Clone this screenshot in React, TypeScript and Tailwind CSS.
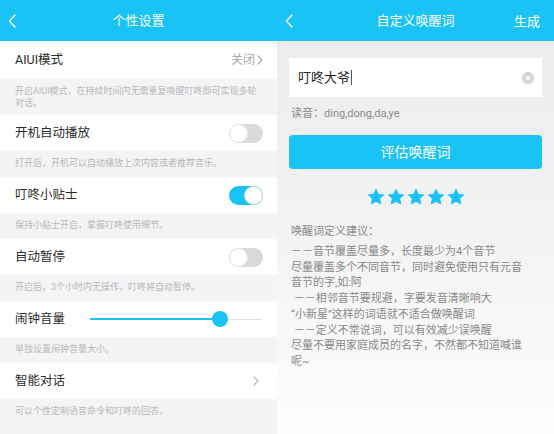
import { ReactNode } from "react";

const BLUE = "bg-[#19c3f6]";

function BackArrow() {
  return (
    <svg width="8" height="14" viewBox="0 0 8 14" className="absolute left-[8px] top-[14px]">
      <path d="M7 1 L1.5 7 L7 13" fill="none" stroke="#ffffff" strokeWidth="1.3" strokeLinecap="round" strokeLinejoin="round" />
    </svg>
  );
}

function Chevron({ color = "#a8a8a8" }: { color?: string }) {
  return (
    <svg width="6" height="10" viewBox="0 0 6 10">
      <path d="M1 1 L5 5 L1 9" fill="none" stroke={color} strokeWidth="1.2" strokeLinecap="round" strokeLinejoin="round" />
    </svg>
  );
}

function Toggle({ on }: { on?: boolean }) {
  return (
    <div
      className={
        on
          ? "relative w-[34px] h-[19px] rounded-full bg-[#19c3f6]"
          : "relative w-[34px] h-[19px] rounded-full bg-[#dadada]"
      }
    >
      <div
        className={
          on
            ? "absolute right-0 top-0 w-[19px] h-[19px] rounded-full bg-white border border-[#d8d8d8]"
            : "absolute left-0 top-0 w-[19px] h-[19px] rounded-full bg-white border border-[#e6e6e6]"
        }
      />
    </div>
  );
}

function Row({ title, right, h = "h-[36px]" }: { title: string; right?: ReactNode; h?: string }) {
  return (
    <div className={`${h} bg-white flex items-center justify-between pl-[15px] pr-[14px]`}>
      <span className="text-[12.5px] text-[#2b2b2b]">{title}</span>
      {right}
    </div>
  );
}

function Desc({ children }: { children: ReactNode }) {
  return (
    <div className="h-[26px] flex items-center px-[15px] text-[9px] text-[#b8b8b8]">{children}</div>
  );
}

function Star() {
  return (
    <svg width="18" height="18" viewBox="0 0 24 24">
      <path
        d="M12 1.8 L15.1 8.3 L22.2 9.2 L17 14.1 L18.3 21.2 L12 17.7 L5.7 21.2 L7 14.1 L1.8 9.2 L8.9 8.3 Z"
        fill="#19c3f6"
        stroke="#19c3f6"
        strokeWidth="1.2"
        strokeLinejoin="round"
      />
    </svg>
  );
}

function SettingsPanel() {
  return (
    <div className="w-[277px] h-[434px] bg-[#f3f4f6] flex flex-col">
      <div className={`relative h-[41px] ${BLUE} flex items-center justify-center`}>
        <BackArrow />
        <span className="text-white text-[13px]">个性设置</span>
      </div>
      <Row
        h="h-[38px]"
        title="AIUI模式"
        right={
          <div className="flex items-center gap-[2px] text-[12px] text-[#a8a8a8]">
            关闭
            <Chevron />
          </div>
        }
      />
      <div className="py-[6px] px-[15px] text-[9px] leading-[12px] text-[#b8b8b8]">
        开启AIUI模式，在持续时间内无需重复唤醒叮咚即可实现多轮对话。
      </div>
      <Row title="开机自动播放" right={<Toggle />} />
      <Desc>打开后，开机可以自动播放上次内容或者推荐音乐。</Desc>
      <Row title="叮咚小贴士" right={<Toggle on />} />
      <Desc>保持小贴士开启，掌握叮咚使用细节。</Desc>
      <Row title="自动暂停" right={<Toggle />} />
      <Desc>开启后，3个小时内无操作，叮咚将自动暂停。</Desc>
      <div className="h-[36px] bg-white flex items-center pl-[15px] pr-[15px]">
        <span className="text-[12.5px] text-[#2b2b2b] w-[75px]">闹钟音量</span>
        <div className="relative flex-1 h-[16px] flex items-center">
          <div className="w-[130px] h-[2px] bg-[#19c3f6]" />
          <div className="flex-1 h-[1px] bg-[#e2e2e2]" />
          <div className="absolute left-[122px] top-0 w-[16px] h-[16px] rounded-full bg-[#19c3f6]" />
        </div>
      </div>
      <Desc>单独设置闹钟音量大小。</Desc>
      <Row
        title="智能对话"
        right={
          <div className="pr-[4px]">
            <Chevron color="#b8b8b8" />
          </div>
        }
      />
      <Desc>可以个性定制语音命令和叮咚的回答。</Desc>
    </div>
  );
}

const tips = [
  "－－音节覆盖尽量多，长度最少为4个音节",
  "尽量覆盖多个不同音节，同时避免使用只有元音",
  "音节的字,如:阿",
  " －－相邻音节要规避，字要发音清晰响大",
  "“小新星”这样的词语就不适合做唤醒词",
  " －－定义不常说词，可以有效减少误唤醒",
  "尽量不要用家庭成员的名字，不然都不知道喊谁",
  "呢~",
];

function WakeWordPanel() {
  return (
    <div className="w-[277px] h-[434px] bg-gradient-to-b from-[#ececec] via-[#f2f2f2] to-[#fdfdfd] flex flex-col">
      <div className={`relative h-[41px] ${BLUE} flex items-center justify-center`}>
        <BackArrow />
        <span className="text-white text-[13px]">自定义唤醒词</span>
        <span className="absolute right-[14px] top-[12px] text-white text-[13px]">生成</span>
      </div>
      <div className="px-[12px] pt-[17px] flex flex-col">
        <div className="h-[39px] bg-white flex items-center justify-between pl-[9px] pr-[8px]">
          <div className="flex items-center text-[13px] text-[#222]">
            叮咚大爷
            <span className="ml-[1px] w-[1px] h-[15px] bg-[#555]" />
          </div>
          <div className="w-[12px] h-[12px] rounded-full bg-[#d4d4d4] flex items-center justify-center">
            <svg width="6" height="6" viewBox="0 0 6 6">
              <path d="M1 1 L5 5 M5 1 L1 5" stroke="#ffffff" strokeWidth="1.2" />
            </svg>
          </div>
        </div>
        <div className="mt-[9px] h-[16px] leading-[16px] pl-[2px] text-[11px] text-[#8a8a8a]">读音：ding,dong,da,ye</div>
        <div className={`mt-[13px] h-[34px] rounded-[4px] ${BLUE} flex items-center justify-center text-white text-[14px]`}>
          评估唤醒词
        </div>
        <div className="mt-[19px] flex justify-center gap-[2px]">
          <Star />
          <Star />
          <Star />
          <Star />
          <Star />
        </div>
        <div className="mt-[18px] pl-[2px] text-[11px] text-[#888888]">
          <div className="leading-[16px]">唤醒词定义建议：</div>
          <div className="mt-[4px] leading-[15.7px]">
            {tips.map((t) => (
              <div key={t} className="whitespace-pre">
                {t}
              </div>
            ))}
          </div>
        </div>
      </div>
    </div>
  );
}

export default function App() {
  return (
    <div className="w-[554px] h-[434px] overflow-hidden flex font-[Roboto,'Noto_Sans_CJK_SC',sans-serif]">
      <SettingsPanel />
      <WakeWordPanel />
    </div>
  );
}
